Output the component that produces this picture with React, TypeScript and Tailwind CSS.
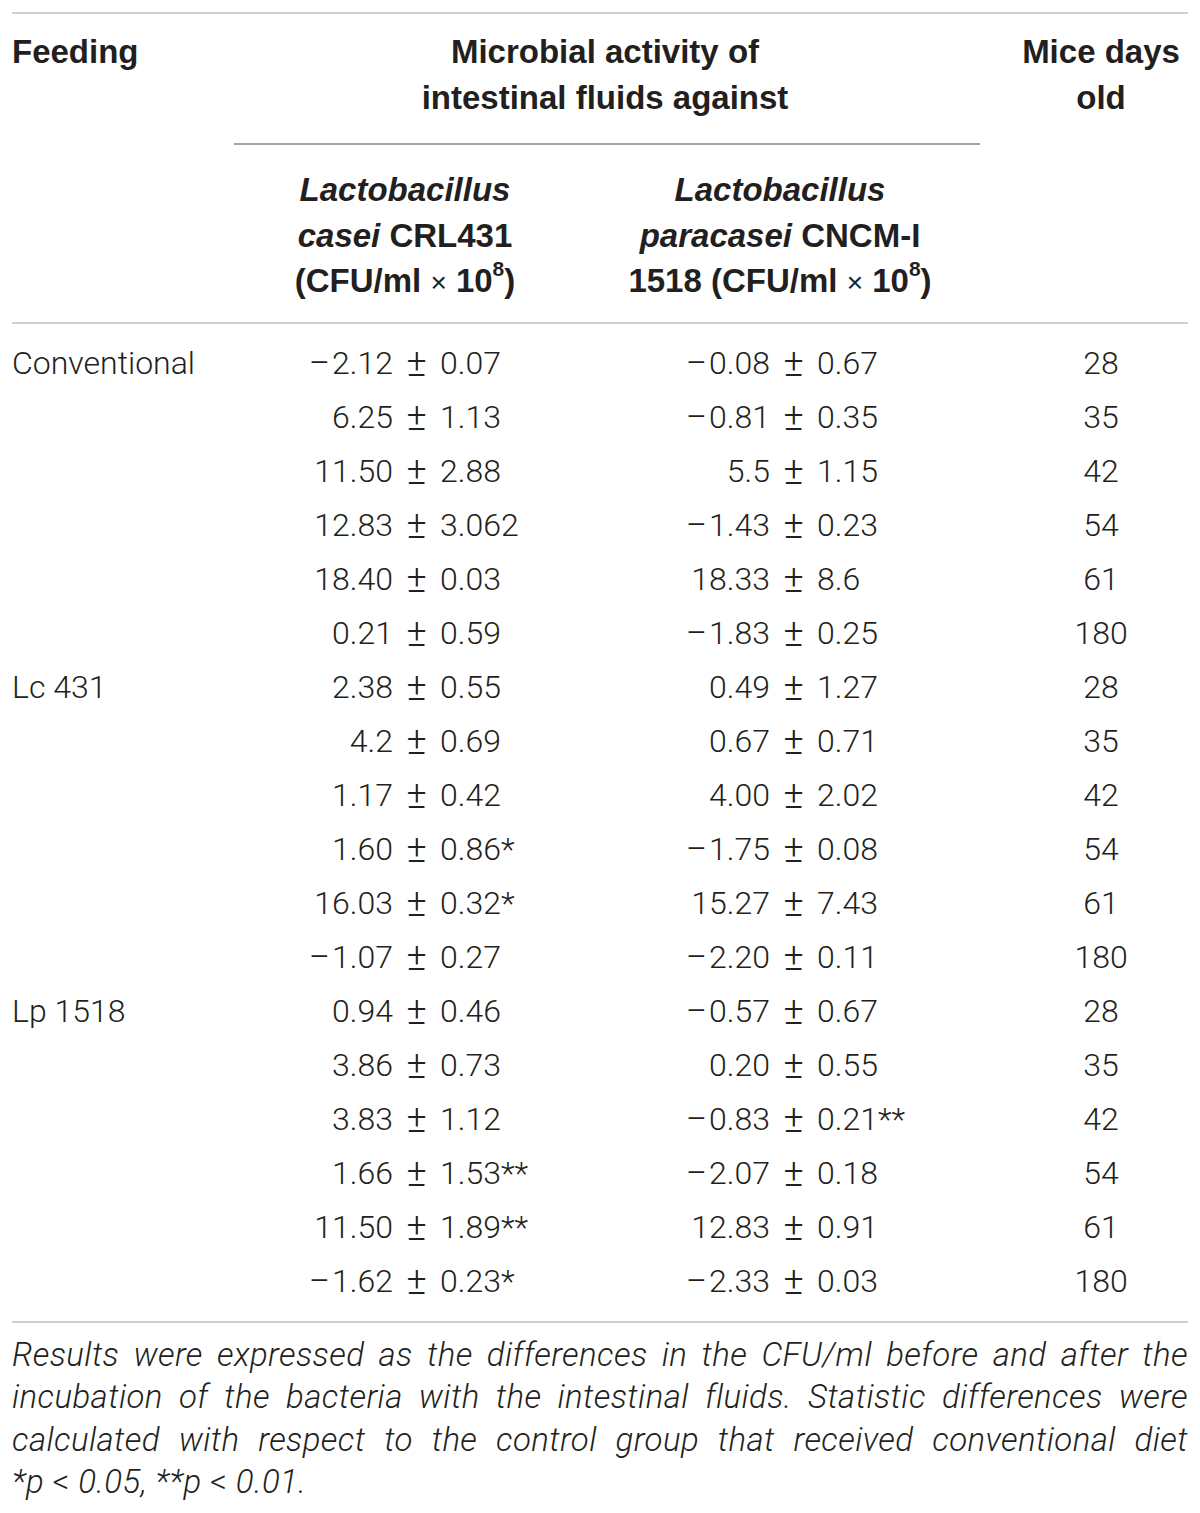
import React from "react";

type Row = { feed?: string; a: [string, string]; b: [string, string]; d: string };

const rows: Row[] = [
  { feed: "Conventional", a: ["\u22122.12", "0.07"], b: ["\u22120.08", "0.67"], d: "28" },
  { a: ["6.25", "1.13"], b: ["\u22120.81", "0.35"], d: "35" },
  { a: ["11.50", "2.88"], b: ["5.5", "1.15"], d: "42" },
  { a: ["12.83", "3.062"], b: ["\u22121.43", "0.23"], d: "54" },
  { a: ["18.40", "0.03"], b: ["18.33", "8.6"], d: "61" },
  { a: ["0.21", "0.59"], b: ["\u22121.83", "0.25"], d: "180" },
  { feed: "Lc 431", a: ["2.38", "0.55"], b: ["0.49", "1.27"], d: "28" },
  { a: ["4.2", "0.69"], b: ["0.67", "0.71"], d: "35" },
  { a: ["1.17", "0.42"], b: ["4.00", "2.02"], d: "42" },
  { a: ["1.60", "0.86*"], b: ["\u22121.75", "0.08"], d: "54" },
  { a: ["16.03", "0.32*"], b: ["15.27", "7.43"], d: "61" },
  { a: ["\u22121.07", "0.27"], b: ["\u22122.20", "0.11"], d: "180" },
  { feed: "Lp 1518", a: ["0.94", "0.46"], b: ["\u22120.57", "0.67"], d: "28" },
  { a: ["3.86", "0.73"], b: ["0.20", "0.55"], d: "35" },
  { a: ["3.83", "1.12"], b: ["\u22120.83", "0.21**"], d: "42" },
  { a: ["1.66", "1.53**"], b: ["\u22122.07", "0.18"], d: "54" },
  { a: ["11.50", "1.89**"], b: ["12.83", "0.91"], d: "61" },
  { a: ["\u22121.62", "0.23*"], b: ["\u22122.33", "0.03"], d: "180" },
];

const body = "font-['Roboto','Liberation_Sans',sans-serif] font-light";
const bold = "font-['Liberation_Sans','Arial',sans-serif] font-bold";

function Num({ s }: { s: string }) {
  if (s.startsWith("\u2212")) {
    return (
      <>
        <span className="relative top-[2px] text-[38px] leading-none mr-[2px]">{"\u2212"}</span>
        {s.slice(1)}
      </>
    );
  }
  return <>{s}</>;
}

function PM({ v, leftW }: { v: [string, string]; leftW: string }) {
  return (
    <div className="flex items-baseline h-[54px]">
      <span className={`${leftW} text-right`}>
        <Num s={v[0]} />
      </span>
      <span className="relative top-[2px] w-[47px] text-center text-[38px] leading-none">±</span>
      <span>{v[1]}</span>
    </div>
  );
}

export default function App() {
  return (
    <div className="w-[1200px] bg-white px-[12px] pt-[12px] pb-[12px] text-[#231f20]">
      <div className="h-[2px] bg-[#cfcfcf]" />
      {/* header */}
      <div className={`grid grid-cols-[222px_342px_408px_204px] ${bold} text-[33px] leading-[46px]`}>
        <div className="pt-[15px]">Feeding</div>
        <div className="col-span-2 pt-[15px] pr-[4px]">
          <div className="text-center pr-[4px]">
            Microbial activity of
            <br />
            intestinal fluids against
          </div>
          <div className="mt-[22px] h-[2px] bg-[#a3a3a3]" />
        </div>
        <div className="pt-[15px] pl-[30px] text-center">
          Mice days
          <br />
          old
        </div>
        <div />
        <div className="pt-[22px] pb-[16px] text-center leading-[45.5px]">
          <i>Lactobacillus</i>
          <br />
          <i>casei</i> CRL431
          <br />
          (CFU/ml <span className="font-normal text-[28px]">×</span> 10
          <sup className="text-[21px] top-[-0.75em]">8</sup>)
        </div>
        <div className="pt-[22px] pb-[16px] text-center leading-[45.5px]">
          <i>Lactobacillus</i>
          <br />
          <i>paracasei</i> CNCM-I
          <br />
          1518 (CFU/ml <span className="font-normal text-[28px]">×</span> 10
          <sup className="text-[21px] top-[-0.75em]">8</sup>)
        </div>
        <div />
      </div>
      <div className="h-[2px] bg-[#cfcfcf]" />
      {/* body */}
      <div className={`${body} text-[32px] leading-[54px] pt-[12px] pb-[13px]`}>
        {rows.map((r, i) => (
          <div key={i} className="grid grid-cols-[222px_342px_408px_204px] h-[54px]">
            <div>{r.feed ?? ""}</div>
            <PM v={r.a} leftW="w-[159px]" />
            <PM v={r.b} leftW="w-[194px]" />
            <div className="pl-[30px] text-center">{r.d}</div>
          </div>
        ))}
      </div>
      <div className="h-[2px] bg-[#cfcfcf]" />
      <div className={`${body} italic text-[33px] tracking-[0.4px] leading-[42.5px] text-[#231f20] pt-[11px]`}>
        <div className="text-justify [text-align-last:justify]">
          Results were expressed as the differences in the CFU/ml before and after the
        </div>
        <div className="text-justify [text-align-last:justify]">
          incubation of the bacteria with the intestinal fluids. Statistic differences were
        </div>
        <div className="text-justify [text-align-last:justify]">
          calculated with respect to the control group that received conventional diet
        </div>
        <div>
          *p <span className="not-italic">&lt;</span> 0.05, **p <span className="not-italic">&lt;</span> 0.01.
        </div>
      </div>
    </div>
  );
}
